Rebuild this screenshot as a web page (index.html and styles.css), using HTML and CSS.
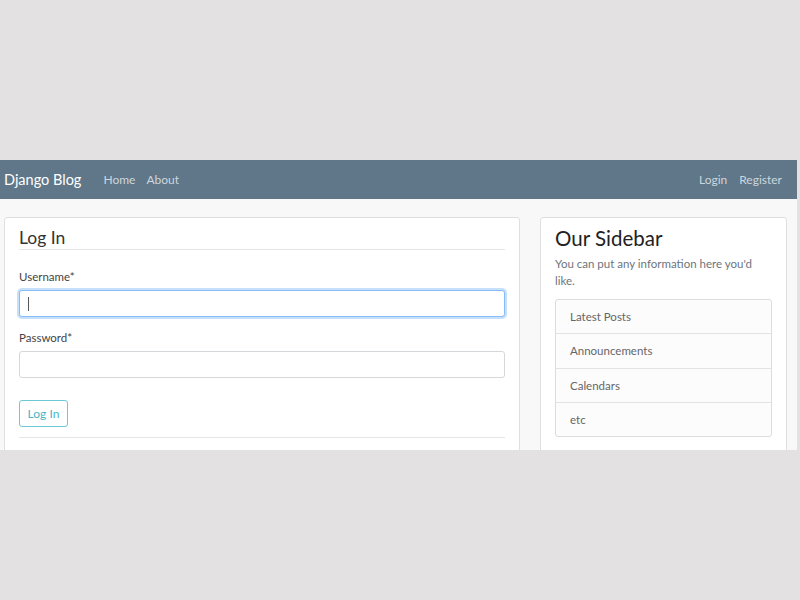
FILE: index.html
```html
<!DOCTYPE html>
<html>
<head>
<meta charset="utf-8">
<link rel="stylesheet" href="styles.css">
</head>
<body>
<div class="frame">
  <header class="navbar">
    <div class="nav-left">
      <span class="brand">Django Blog</span>
      <a class="nav-link">Home</a>
      <a class="nav-link">About</a>
    </div>
    <div class="nav-right">
      <a class="nav-link">Login</a>
      <a class="nav-link">Register</a>
    </div>
  </header>
  <main class="main">
    <section class="card login">
      <div class="legend">Log In</div>
      <div class="group">
        <label class="label">Username*</label>
        <div class="input focused"><span class="caret"></span></div>
      </div>
      <div class="group">
        <label class="label">Password*</label>
        <div class="input"></div>
      </div>
      <div class="btn-row"><button class="btn">Log In</button></div>
      <div class="rule"></div>
    </section>
    <aside class="card sidebar">
      <h3 class="side-title">Our Sidebar</h3>
      <p class="side-text">You can put any information here you'd like.</p>
      <ul class="list">
        <li class="item">Latest Posts</li>
        <li class="item">Announcements</li>
        <li class="item">Calendars</li>
        <li class="item">etc</li>
      </ul>
    </aside>
  </main>
</div>
</body>
</html>
```
FILE: styles.css
```css
html, body {
  margin: 0;
  padding: 0;
  background: #e3e1e1;
  font-family: "Lato", "Open Sans", sans-serif;
}
.frame {
  margin-top: 160px;
  width: 797px;
  height: 290px;
  overflow: hidden;
  background: #f8f8f8;
}
.navbar {
  height: 39px;
  background: #5f7789;
  display: flex;
  align-items: center;
  justify-content: space-between;
  padding: 0 15px 0 4px;
}
.nav-left, .nav-right {
  display: flex;
  align-items: center;
}
.brand {
  color: #fff;
  font-size: 14.5px;
  margin-right: 22px;
}
.nav-link {
  color: #cdd6dd;
  font-size: 12px;
  margin-right: 11px;
}
.nav-right .nav-link:first-child { margin-right: 12px; }
.nav-right .nav-link:last-child { margin-right: 0; }
.main {
  display: flex;
  align-items: flex-start;
  padding: 18px 0 0 4px;
  gap: 20px;
}
.card {
  background: #fff;
  border: 1px solid #dfdfdf;
  border-radius: 3px;
  box-sizing: border-box;
}
.login {
  width: 516px;
  height: 260px;
  padding: 10px 14px 0 14px;
}
.legend {
  font-size: 17.5px;
  color: #333;
  line-height: 20px;
  padding-bottom: 1px;
  border-bottom: 1px solid #e5e5e5;
  margin-bottom: 18px;
}
.group {
  margin-bottom: 12px;
}
.label {
  display: block;
  font-size: 11.5px;
  color: #444;
  line-height: 16px;
  padding-top: 1px;
  margin-bottom: 5px;
}
.input {
  height: 27px;
  box-sizing: border-box;
  border: 1px solid #d5d8db;
  border-radius: 3px;
  background: #fff;
  position: relative;
}
.input.focused {
  border-color: #86bdf7;
  box-shadow: 0 0 0 2px #c6e0fb;
}
.caret {
  position: absolute;
  left: 8px;
  top: 6px;
  width: 1px;
  height: 14px;
  background: #555;
}
.btn-row {
  padding-top: 10px;
  margin-bottom: 10px;
}
.btn {
  font-family: inherit;
  font-size: 12px;
  color: #49b4c7;
  background: #fff;
  border: 1px solid #6ec8d6;
  border-radius: 3px;
  height: 27px;
  width: 49px;
  padding: 0;
}
.rule {
  border-top: 1px solid #e5e5e5;
}
.sidebar {
  width: 247px;
  height: 260px;
  padding: 8px 14px 0 14px;
}
.side-title {
  margin: 0;
  font-size: 20.5px;
  font-weight: 400;
  color: #222;
  line-height: 24px;
}
.side-text {
  margin: 5px 0 10px 0;
  font-size: 11.5px;
  line-height: 17px;
  color: #6c757d;
}
.list {
  list-style: none;
  margin: 0;
  padding: 0;
  border: 1px solid #dcdcdc;
  border-radius: 3px;
  background: #fcfcfd;
}
.item {
  height: 33.25px;
  line-height: 34px;
  padding-left: 14px;
  font-size: 11.5px;
  color: #666;
  border-top: 1px solid #e3e3e3;
}
.item:first-child { border-top: none; }
```
